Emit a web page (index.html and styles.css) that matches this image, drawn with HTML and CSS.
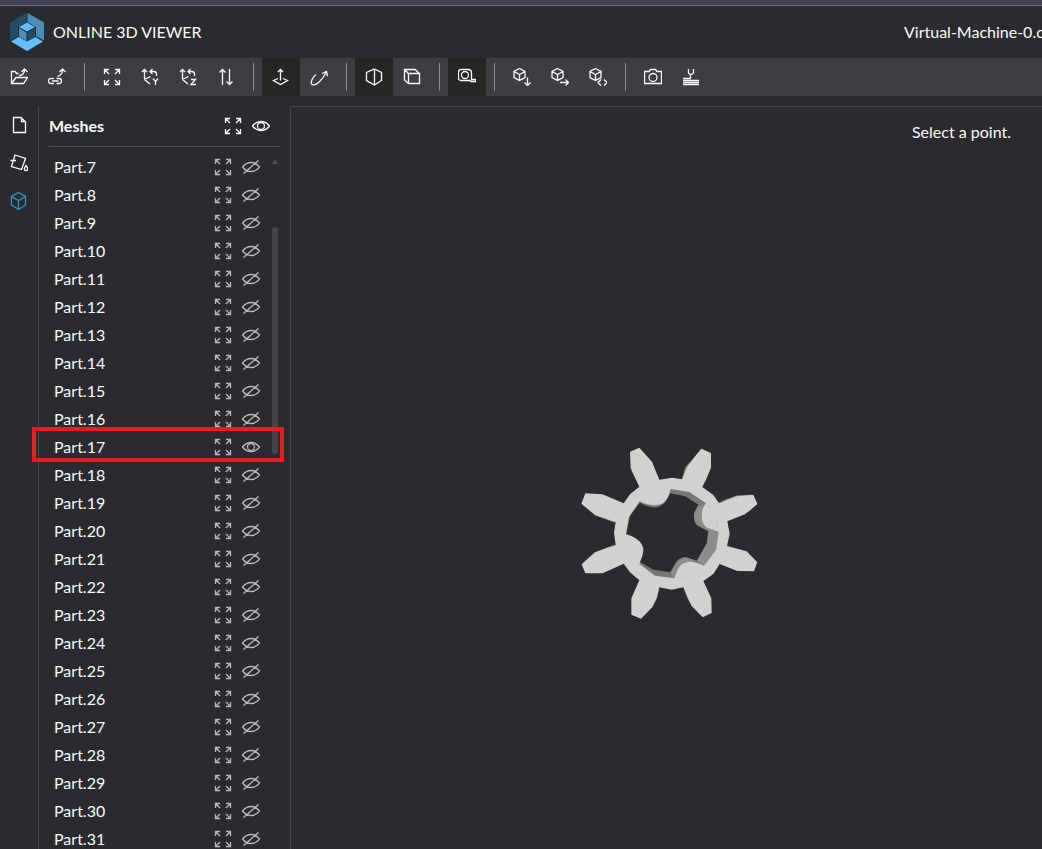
FILE: index.html
```html
<!DOCTYPE html>
<html lang="en">
<head>
<meta charset="utf-8">
<title>Online 3D Viewer</title>
<link rel="stylesheet" href="styles.css">
</head>
<body>
<svg class="sprite" aria-hidden="true">
  <symbol id="open" viewBox="0 0 18 18"><path d="M8.500 5.500H6.500L5 3.500H1.500V15.500H13.500L17.500 9.500H6L1.500 15.500M9 7.500C12.500 7.500 14.500 6 14.500 1.500M11.500 4L14.500 1L17.500 4"/></symbol>
  <symbol id="link" viewBox="0 0 18 18"><path d="M6 10.500H3Q.500 10.500 .500 13T3 15.500H6M8.500 10.500H11Q13.500 10.500 13.500 13T11 15.500H8.500M4 13H10.500M9.500 8.500C13 7.500 14.500 5 14.500 1.500M11.500 4L14.500 1L17.500 4"/></symbol>
  <symbol id="fit" viewBox="0 0 18 18"><path d="M1.500 6V1.500H6M1.500 1.500L6 6M12 1.500H16.500V6M16.500 1.500L12 6M1.500 12V16.500H6M1.500 16.500L6 12M12 16.500H16.500V12M16.500 16.500L12 12"/></symbol>
  <symbol id="axes" viewBox="0 0 18 18"><path d="M3.500 11.500V1.500M1 4L3.500 1.500L6 4M3.500 11.500L9 16M3.500 11.500L9.500 8.500M15.500 8V6Q15.500 3.500 12.500 3.500H9M11.500 1L9 3.500L11.500 6"/></symbol>
  <symbol id="upy" viewBox="0 0 18 18"><use href="#axes"/><path d="M12 10.500L14.500 13.500L17 10.500M14.500 13.500V17"/></symbol>
  <symbol id="upz" viewBox="0 0 18 18"><use href="#axes"/><path d="M12 11.500H16.500L12 16.500H17"/></symbol>
  <symbol id="flip" viewBox="0 0 18 18"><path d="M5.500 17V1.500M2.500 4.500L5.500 1.500L8.500 4.500M12.500 1V16.500M9.500 13.500L12.500 16.500L15.500 13.500"/></symbol>
  <symbol id="fixup" viewBox="0 0 18 18"><path d="M8.500 12.500V1.500M6 4L8.500 1.500L11 4M6 10.500L1.500 12.500L8.500 16.500L15.500 12.500L11 10.500"/></symbol>
  <symbol id="free" viewBox="0 0 18 18"><path d="M6 6.500C2.500 9 0 14.500 2 16.500C5 18.500 12 13 16 4.500M12 5.500L16.500 3.500L17.500 8"/></symbol>
  <symbol id="persp" viewBox="0 0 18 18"><path d="M9.500 1L16.500 4.500V12.500L9.500 17L1.500 12.500V4.500ZM9.500 1V17"/></symbol>
  <symbol id="ortho" viewBox="0 0 18 18"><path d="M1.500 1.500H12L16.500 5.500V15.500H5.500L1.500 12ZM1.500 1.500L5.500 5.500H16.500M5.500 5.500V15.500"/></symbol>
  <symbol id="tape" viewBox="0 0 18 18"><path d="M.500 10V4Q.500 1.500 3 1.500H10Q13.500 1.500 13.500 5V11.500H18V14.500M18 13.500H13L12 12.500H3Q.500 12.500 .500 10"/><circle cx="7" cy="7" r="3.500"/></symbol>
  <symbol id="cube-small" viewBox="0 0 18 18"><path d="M6.500 .500L12 3.500V9.500L6.500 12.500L1 9.500V3.500ZM1 3.500L6.500 6.500L12 3.500M6.500 6.500V12.500"/></symbol>
  <symbol id="download" viewBox="0 0 18 18"><use href="#cube-small"/><path d="M14.500 9.500V17.500M11.500 14.500L14.500 17.500L17.500 14.500"/></symbol>
  <symbol id="export" viewBox="0 0 18 18"><use href="#cube-small"/><path d="M9 14.500H17.500M14.500 11.500L17.500 14.500L14.500 17.500"/></symbol>
  <symbol id="embed" viewBox="0 0 18 18"><use href="#cube-small"/><path d="M12 11.500L9 14.500L12 17.500M15 11.500L18 14.500L15 17.500"/></symbol>
  <symbol id="camera" viewBox="0 0 18 18"><path d="M.500 3.500H5L6.500 1.500H11.500L13 3.500H17.500V15.500H.500Z"/><circle cx="9" cy="9.500" r="4"/></symbol>
  <symbol id="print" viewBox="0 0 18 18"><path d="M6.500 1V5L8.500 7L11.500 5V1M8.500 7V10.500M1 10.500H9M1 12.500H17M1 14.500H17M1 16.500H17"/></symbol>
  <symbol id="file" viewBox="0 0 18 18"><path d="M3.500 1.500H11L15.500 6V16.500H3.500ZM11.500 1.500V5.500H15.500"/></symbol>
  <symbol id="material" viewBox="0 0 18 18"><path d="M5 1L15.500 4.500L11.500 15.500L1.500 12.500ZM.500 6.500H6M16 11.500L14.500 14Q14 16.500 16 16.500T17.500 14Z"/></symbol>
  <symbol id="cube" viewBox="0 0 18 18"><path d="M8.500 .500L15.500 4.500V13L8.500 17.500L1.500 13V4.500ZM1.500 4.500L8.500 8.500L15.500 4.500M8.500 8.500V17.500"/></symbol>
  <symbol id="eye" viewBox="0 0 18 18"><path d="M.500 9Q4 4.500 9 4.500T17.500 9Q14 13.500 9 13.500T.500 9Z"/><circle cx="9" cy="9" r="3.500"/></symbol>
  <symbol id="hidden" viewBox="0 0 18 18"><path d="M.500 9Q4 4.500 9 4.500T17.500 9Q14 13.500 9 13.500T.500 9ZM1.500 15.500L16.500 2.500"/></symbol>
</svg>

<header class="header">
  <a class="brand" href="#">
    <svg class="logo" viewBox="0 0 34 38" aria-hidden="true">
      <path fill="#264d66" d="M16.500 0L0 9.500V27.500L8 23V14L16.500 9Z"/>
      <path fill="#4a8cba" d="M17.500 0L34 9.500V27.500L26 23V14L17.500 9Z"/>
      <path fill="#64beff" d="M1 28.500L8.500 24L17 28.500L25.500 24L33 28.500L17 38Z"/>
      <path fill="#64beff" d="M17 9.500L25 14L17 18.500L9 14Z"/>
      <path fill="#4a8cba" d="M9 15L16.500 19.500V28L9 23.500Z"/>
      <path fill="#264d66" d="M25 15L17.500 19.500V28L25 23.500Z"/>
    </svg>
    <span>ONLINE 3D VIEWER</span>
  </a>
  <div class="file-name">Virtual-Machine-0.c</div>
</header>

<nav class="toolbar" aria-label="Tools">
  <button aria-label="Open file"><svg><use href="#open"/></svg></button>
  <button aria-label="Open from link"><svg><use href="#link"/></svg></button>
  <i class="separator"></i>
  <button aria-label="Fit to window"><svg><use href="#fit"/></svg></button>
  <button aria-label="Y axis up"><svg><use href="#upy"/></svg></button>
  <button aria-label="Z axis up"><svg><use href="#upz"/></svg></button>
  <button aria-label="Flip up vector"><svg><use href="#flip"/></svg></button>
  <i class="separator"></i>
  <button class="active" aria-label="Fixed up vector"><svg><use href="#fixup"/></svg></button>
  <button aria-label="Free orbit"><svg><use href="#free"/></svg></button>
  <i class="separator"></i>
  <button class="active" aria-label="Perspective camera"><svg><use href="#persp"/></svg></button>
  <button aria-label="Orthographic camera"><svg><use href="#ortho"/></svg></button>
  <i class="separator"></i>
  <button class="active" aria-label="Measure"><svg><use href="#tape"/></svg></button>
  <i class="separator"></i>
  <button aria-label="Download"><svg><use href="#download"/></svg></button>
  <button aria-label="Export"><svg><use href="#export"/></svg></button>
  <button aria-label="Share"><svg><use href="#embed"/></svg></button>
  <i class="separator"></i>
  <button aria-label="Create snapshot"><svg><use href="#camera"/></svg></button>
  <button aria-label="3D print"><svg><use href="#print"/></svg></button>
</nav>

<main class="main">
  <nav class="tabs" aria-label="Panels">
    <button aria-label="Files"><svg><use href="#file"/></svg></button>
    <button aria-label="Materials"><svg><use href="#material"/></svg></button>
    <button class="selected" aria-label="Meshes"><svg><use href="#cube"/></svg></button>
  </nav>
  <section class="panel">
    <div class="panel-head">
      <h2>Meshes</h2>
      <button aria-label="Fit all"><svg><use href="#fit"/></svg></button>
      <button aria-label="Show or hide all"><svg><use href="#eye"/></svg></button>
    </div>
    <div class="scroller">
      <ul class="meshes" id="meshes"></ul>
      <div class="scrollbar"><i class="arrow"></i><i class="thumb"></i></div>
    </div>
  </section>
  <section class="canvas">
    <p class="hint">Select a point.</p>
    <svg class="model" viewBox="0 0 600 585" role="img" aria-label="Gear model">
      <path fill="#777" d="M182 103L210 157L216 150ZM336 133L344 100L360 78L350 130ZM447 200L500 181L550 179L500 190ZM46 411L35 388L75 352L137 327L80 360ZM268 457L262 488L247 517L260 460ZM340 457L352 490L365 513L350 470ZM34 206L76 242L137 264L90 235Z"/>
      <path fill="#777" d="M205 195L305 158L360 168L412 202L450 288L440 348L402 394L313 432L250 424L205 388L164 297L175 243Z"/>
      <path fill="#8c8c8c" d="M408 205L370 220L374 265L412 285L408 330L380 377L402 392L438 345L446 290ZM380 377L345 366L325 378L301 412L313 430L350 383Z"/>
      <path fill="#2a2b2e" d="M209 203Q240 220 262 217Q288 210 300 175L345 184L385 209L373 232Q366 268 395 279L415 289L410 325L380 377L348 366Q326 366 315 386L301 412L250 404L209 380Q220 360 220 342Q214 313 168 300L180 243Z"/>
      <path fill="#d1d1d1" fill-rule="evenodd" d="M180 50L208 38L246 80L256 105L268 134L307 128L336 133L350 98L366 75L394 41L423 54L423 98L410 130L397 156L430 180L447 204L500 184L550 179L562 207L545 222L525 238L472 259L479 297L471 333L530 349L562 382L552 409L502 408L449 387L430 417L400 438L424 490L425 534L398 547L365 513L352 485L340 457L305 464L268 457L260 488L247 517L213 551L184 539L184 490L208 436L180 412L161 386L98 415L46 415L35 388L75 352L137 330L132 293L137 262L76 240L34 206L46 175L97 178L161 205L180 178L208 155L182 100ZM209 199Q235 213 262 210Q292 207 302 162L358 171L408 205L398 222Q388 262 412 278L446 290L438 345L402 392Q345 365 325 400L313 430L255 422L208 386Q220 360 220 342Q214 310 168 298L177 245Z"/>
      <path class="seam" d="M415 213L422 232M435 245L443 278M343 424H360"/>
    </svg>
  </section>
</main>
<script src="app.js"></script>
</body>
</html>
```
FILE: styles.css
```css
* { box-sizing: border-box; }
body {
  margin: 0;
  height: 100vh;
  display: flex;
  flex-direction: column;
  overflow: hidden;
  background: #2a2b2e;
  color: #fafafa;
  font: 16px/28px Lato, "Open Sans", sans-serif;
}
.sprite { position: absolute; width: 0; height: 0; }
button {
  display: flex;
  align-items: center;
  justify-content: center;
  padding: 0;
  border: 0;
  background: none;
  color: inherit;
}
button svg {
  width: 18px;
  height: 18px;
  fill: none;
  stroke: currentColor;
  stroke-width: 1.3;
}
.header {
  flex: none;
  height: 58px;
  padding-left: 10px;
  display: flex;
  align-items: center;
  justify-content: space-between;
  border-top: 5px solid #404152;
  box-shadow: inset 0 1px #6c6c6e;
}
.brand {
  display: flex;
  align-items: center;
  gap: 9px;
  color: inherit;
  text-decoration: none;
}
.logo { width: 34px; height: 38px; }
.file-name {
  width: 138px;
  overflow: hidden;
  white-space: nowrap;
}
.toolbar {
  flex: none;
  display: flex;
  align-items: center;
  background: #3d3e42;
}
.toolbar button { width: 38px; height: 38px; }
.toolbar .active { background: #262626; }
.separator {
  width: 1px;
  height: 28px;
  margin: 0 8px;
  background: #8c8c8e;
}
.main {
  flex: 1;
  min-height: 0;
  display: flex;
  padding-top: 10px;
  overflow: hidden;
}
.tabs {
  width: 39px;
  border-right: 1px solid #444548;
}
.tabs button { width: 38px; height: 38px; }
.tabs .selected { color: #3393bd; }
.panel {
  width: 251px;
  padding: 0 10px;
}
.panel-head {
  display: flex;
  align-items: center;
  gap: 10px;
  height: 41px;
  padding-right: 10px;
  border-bottom: 1px solid #505154;
}
.panel-head h2 {
  flex: 1;
  margin: 0;
  font-size: 16px;
  font-weight: bold;
}
.scroller { display: flex; padding: 6px 0 0 5px; }
.meshes {
  flex: 1;
  margin: 0;
  padding: 0;
  list-style: none;
}
.meshes li {
  position: relative;
  display: flex;
  align-items: center;
  gap: 10px;
  height: 28px;
  padding-right: 12px;
}
.meshes span { flex: 1; }
.meshes button { color: #b8b8b8; }
.highlight::after {
  content: "";
  position: absolute;
  inset: -6px -12px -1px -22px;
  z-index: 1;
  border: 4px solid #e61e1e;
}
.scrollbar { width: 8px; }
.arrow {
  display: block;
  margin: 6px 0 63px;
  width: 6px;
  height: 5px;
  background: #505154;
  clip-path: polygon(50% 0, 100% 100%, 0 100%);
}
.thumb {
  display: block;
  width: 6px;
  height: 227px;
  border-radius: 3px;
  background: #444548;
}
.canvas {
  position: relative;
  flex: 1;
  border: solid #444548;
  border-width: 1px 0 0 1px;
}
.hint { margin: 11px 31px; text-align: right; }
.model {
  position: absolute;
  left: 279px;
  top: 328px;
  width: 200px;
  height: 195px;
}
.seam {
  fill: none;
  stroke: #a0a0a0;
  stroke-width: 2;
  stroke-dasharray: 4 6;
}
```
FILE: app.js
```javascript
const FIRST = 7;
const LAST = 31;
const VISIBLE = 17;

document.getElementById("meshes").innerHTML = Array.from(
  { length: LAST - FIRST + 1 },
  (_, i) => {
    const n = FIRST + i;
    const shown = n === VISIBLE;
    return `<li${shown ? ' class="highlight"' : ""}><span>Part.${n}</span>
      <button aria-label="Fit Part.${n}"><svg><use href="#fit"/></svg></button>
      <button aria-label="${shown ? "Hide" : "Show"} Part.${n}"><svg><use href="#${shown ? "eye" : "hidden"}"/></svg></button></li>`;
  }
).join("");
```
